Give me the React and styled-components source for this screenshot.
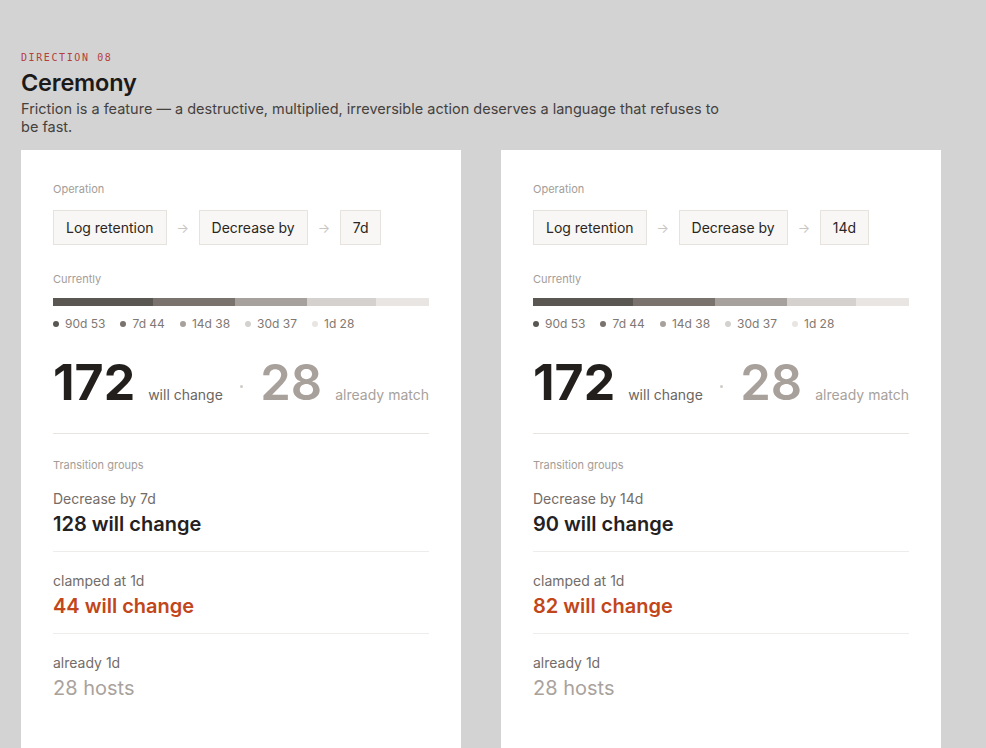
import React from "react";
import styled, { createGlobalStyle } from "styled-components";

const Global = createGlobalStyle`
  html, body { margin: 0; padding: 0; background: #d3d3d3; }
  body {
    font-family: Inter, "Noto Sans", sans-serif;
    color: #2a2623;
    -webkit-font-smoothing: antialiased;
  }
`;

const Page = styled.div`
  padding: 51px 21px 0;
`;

const Eyebrow = styled.div`
  font-family: "DejaVu Sans Mono", "Liberation Mono", monospace;
  font-size: 10px;
  line-height: 14px;
  letter-spacing: 1.6px;
  color: #b3403a;
`;

const Title = styled.h1`
  margin: 4px 0 0;
  font-size: 23.5px;
  line-height: 28px;
  font-weight: 600;
  color: #1c1a19;
  letter-spacing: -0.2px;
`;

const Lede = styled.p`
  margin: 3px 0 0;
  max-width: 712px;
  font-size: 14.5px;
  line-height: 18px;
  color: #45413e;
`;

const Cards = styled.div`
  display: flex;
  gap: 40px;
  margin-top: 14px;
`;

const Card = styled.section`
  width: 440px;
  box-sizing: border-box;
  background: #ffffff;
  padding: 32px 32px 60px;
`;

const Label = styled.div`
  font-size: 11px;
  line-height: 14px;
  color: #a39d98;
  margin-bottom: ${(p) => p.$mb || 0}px;
`;

const Chain = styled.div`
  display: flex;
  align-items: center;
  gap: 10px;
  margin-bottom: 27px;
`;

const Chip = styled.div`
  background: #f8f7f5;
  border: 1px solid #e6e3df;
  padding: 8px 12px;
  font-size: 14px;
  line-height: 17px;
  color: #2a2623;
`;

const Arrow = styled.span`
  font-size: 13px;
  color: #c9c5c1;
  width: 12px;
  text-align: center;
`;

const Bar = styled.div`
  display: flex;
  height: 8px;
  margin-bottom: 10px;
`;

const Segment = styled.div`
  background: ${(p) => p.$color};
  height: 100%;
`;

const Legend = styled.div`
  display: flex;
  gap: 15px;
  font-size: 12px;
  line-height: 16px;
  color: #7f7873;
`;

const LegendItem = styled.span`
  display: inline-flex;
  align-items: center;
  gap: 6px;
`;

const Dot = styled.span`
  width: 6px;
  height: 6px;
  border-radius: 50%;
  background: ${(p) => p.$color};
`;

const Summary = styled.div`
  display: flex;
  align-items: baseline;
  justify-content: space-between;
  margin-top: 26px;
  padding-bottom: 26px;
  border-bottom: 1px solid #e7e4e1;
  margin-bottom: 24px;
`;

const Figure = styled.div`
  display: flex;
  align-items: baseline;
  gap: 13px;
`;

const Big = styled.span`
  font-size: ${(p) => (p.$muted ? 49 : 50)}px;
  line-height: 48px;
  font-weight: ${(p) => (p.$muted ? 600 : 700)};
  color: ${(p) => (p.$muted ? "#a7a09b" : "#221f1d")};
`;

const Caption = styled.span`
  font-size: 14px;
  color: ${(p) => (p.$muted ? "#a7a19c" : "#6b6561")};
`;

const Sep = styled.span`
  width: 3px;
  height: 3px;
  border-radius: 50%;
  background: #cfcbc8;
  align-self: center;
  position: relative;
  top: 4px;
`;

const Group = styled.div`
  padding: 20px 0 15px;
  border-bottom: ${(p) => (p.$last ? "none" : "1px solid #efedeb")};
  &:first-child { padding-top: 18px; }
`;

const GroupLabel = styled.div`
  font-size: 14px;
  line-height: 18px;
  color: #736c67;
  margin-bottom: 4px;
`;

const GroupValue = styled.div`
  font-size: 20px;
  line-height: 24px;
  font-weight: ${(p) => (p.$tone === "muted" ? 400 : 600)};
  color: ${(p) =>
    p.$tone === "warn" ? "#c2461a" : p.$tone === "muted" ? "#a9a29d" : "#24211f"};
`;

const buckets = [
  { key: "90d", count: 53, color: "#5a5652" },
  { key: "7d", count: 44, color: "#7a726d" },
  { key: "14d", count: 38, color: "#a7a19d" },
  { key: "30d", count: 37, color: "#d4d1ce" },
  { key: "1d", count: 28, color: "#e8e5e2" },
];

const total = buckets.reduce((s, b) => s + b.count, 0);

function OperationCard({ amount, change, groups }) {
  return (
    <Card>
      <Label $mb={14}>Operation</Label>
      <Chain>
        <Chip>Log retention</Chip>
        <Arrow>→</Arrow>
        <Chip>Decrease by</Chip>
        <Arrow>→</Arrow>
        <Chip>{amount}</Chip>
      </Chain>

      <Label $mb={12}>Currently</Label>
      <Bar>
        {buckets.map((b) => (
          <Segment
            key={b.key}
            $color={b.color}
            style={{ width: `${(b.count / total) * 100}%` }}
          />
        ))}
      </Bar>
      <Legend>
        {buckets.map((b) => (
          <LegendItem key={b.key}>
            <Dot $color={b.color} />
            {b.key} {b.count}
          </LegendItem>
        ))}
      </Legend>

      <Summary>
        <Figure>
          <Big>{change}</Big>
          <Caption>will change</Caption>
        </Figure>
        <Sep />
        <Figure>
          <Big $muted>{total - change}</Big>
          <Caption $muted>already match</Caption>
        </Figure>
      </Summary>

      <Label>Transition groups</Label>
      <div>
        {groups.map((g, i) => (
          <Group key={g.label} $last={i === groups.length - 1}>
            <GroupLabel>{g.label}</GroupLabel>
            <GroupValue $tone={g.tone}>{g.value}</GroupValue>
          </Group>
        ))}
      </div>
    </Card>
  );
}

export default function App() {
  return (
    <>
      <Global />
      <Page>
        <Eyebrow>DIRECTION 08</Eyebrow>
        <Title>Ceremony</Title>
        <Lede>
          Friction is a feature — a destructive, multiplied, irreversible action
          deserves a language that refuses to be fast.
        </Lede>
        <Cards>
          <OperationCard
            amount="7d"
            change={172}
            groups={[
              { label: "Decrease by 7d", value: "128 will change" },
              { label: "clamped at 1d", value: "44 will change", tone: "warn" },
              { label: "already 1d", value: "28 hosts", tone: "muted" },
            ]}
          />
          <OperationCard
            amount="14d"
            change={172}
            groups={[
              { label: "Decrease by 14d", value: "90 will change" },
              { label: "clamped at 1d", value: "82 will change", tone: "warn" },
              { label: "already 1d", value: "28 hosts", tone: "muted" },
            ]}
          />
        </Cards>
      </Page>
    </>
  );
}
